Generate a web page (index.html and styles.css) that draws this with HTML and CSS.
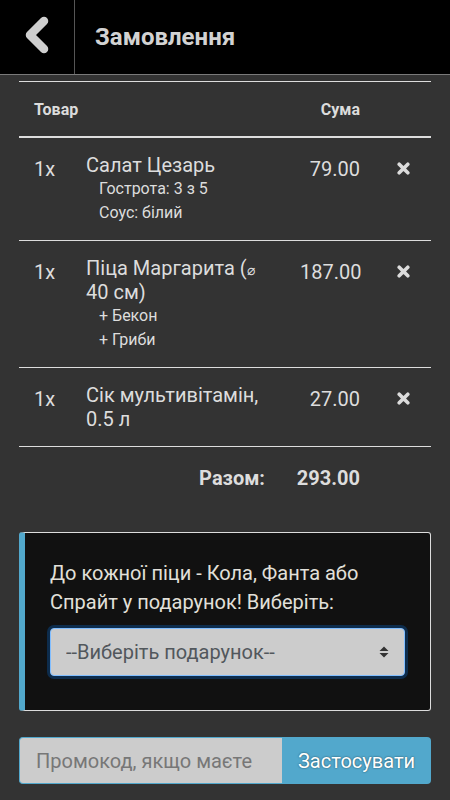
FILE: index.html
```html
<!DOCTYPE html>
<html lang="uk">
<head>
<meta charset="utf-8">
<title>Замовлення</title>
<link rel="stylesheet" href="styles.css">
</head>
<body>
<header class="topbar">
  <a class="back" href="#" aria-label="Назад">
    <svg width="74" height="74" viewBox="0 0 74 74"><polyline points="44,21 30,35 44,49" fill="none" stroke="#cfcfcf" stroke-width="8.5" stroke-linecap="round" stroke-linejoin="round"/></svg>
  </a>
  <h1 class="title">Замовлення</h1>
</header>
<main class="content">
  <div class="order">
    <div class="row head">
      <div class="c-qty">Товар</div>
      <div class="c-name"></div>
      <div class="c-price">Сума</div>
      <div class="c-del"></div>
    </div>
    <div class="row item">
      <div class="c-qty">1x</div>
      <div class="c-name">Салат Цезарь
        <div class="opt">Гострота: 3 з 5</div>
        <div class="opt">Соус: білий</div>
      </div>
      <div class="c-price">79.00</div>
      <div class="c-del"><svg class="x" width="13" height="13" viewBox="0 0 13 13"><path d="M2.2 2.2 L10.8 10.8 M10.8 2.2 L2.2 10.8" stroke="#dcdcdc" stroke-width="3.6" stroke-linecap="round"/></svg></div>
    </div>
    <div class="row item">
      <div class="c-qty">1x</div>
      <div class="c-name">Піца Маргарита (<span class="diam">⌀</span> 40 см)
        <div class="opt">+ Бекон</div>
        <div class="opt">+ Гриби</div>
      </div>
      <div class="c-price">187.00</div>
      <div class="c-del"><svg class="x" width="13" height="13" viewBox="0 0 13 13"><path d="M2.2 2.2 L10.8 10.8 M10.8 2.2 L2.2 10.8" stroke="#dcdcdc" stroke-width="3.6" stroke-linecap="round"/></svg></div>
    </div>
    <div class="row item">
      <div class="c-qty">1x</div>
      <div class="c-name">Сік мультивітамін, 0.5 л</div>
      <div class="c-price">27.00</div>
      <div class="c-del"><svg class="x" width="13" height="13" viewBox="0 0 13 13"><path d="M2.2 2.2 L10.8 10.8 M10.8 2.2 L2.2 10.8" stroke="#dcdcdc" stroke-width="3.6" stroke-linecap="round"/></svg></div>
    </div>
    <div class="row total">
      <div class="c-qty"></div>
      <div class="c-name">Разом:</div>
      <div class="c-price">293.00</div>
      <div class="c-del"></div>
    </div>
  </div>

  <section class="gift">
    <label class="gift-text" for="gift">До кожної піци - Кола, Фанта або Спрайт у подарунок! Виберіть:</label>
    <div class="select-wrap">
      <select id="gift" class="gift-select">
        <option>--Виберіть подарунок--</option>
        <option>Кола</option>
        <option>Фанта</option>
        <option>Спрайт</option>
      </select>
      <svg class="arrows" width="10" height="12" viewBox="0 0 10 12"><path d="M5 0.5 L9.5 5 L0.5 5 Z M5 11.5 L9.5 7 L0.5 7 Z" fill="#333"/></svg>
    </div>
  </section>

  <form class="promo">
    <input class="promo-input" type="text" placeholder="Промокод, якщо маєте">
    <button class="promo-btn" type="button">Застосувати</button>
  </form>
</main>
</body>
</html>
```

FILE: styles.css
```css
* { box-sizing: border-box; }

html, body {
  margin: 0;
  padding: 0;
  background: #333333;
}

body {
  font-family: Roboto, "Noto Sans", "Liberation Sans", sans-serif;
  color: #dddddd;
  height: 800px;
  overflow: hidden;
}

.topbar {
  display: flex;
  align-items: center;
  height: 75px;
  background: #000;
  border-bottom: 1px solid #7a7a7a;
}

.back {
  display: block;
  width: 75px;
  height: 74px;
  border-right: 1px solid #555;
}

.back svg { display: block; }

.title {
  margin: 0 0 0 20px;
  font-size: 24px;
  font-weight: 700;
  color: #d2d2d2;
  line-height: 1;
}

.content {
  padding: 6px 19px 0;
}

.order {
  border-top: 1px solid #dddddd;
}

.row {
  display: grid;
  grid-template-columns: 52px 214px 90px 56px;
}

.row > div {
  padding: 0 15px;
}

.head {
  height: 56px;
  align-items: center;
  border-bottom: 2px solid #dddddd;
  font-size: 16px;
  font-weight: 700;
  color: #dcdcdc;
}

.c-price { text-align: right; }

.c-del {
  display: flex;
  justify-content: center;
}

.item {
  border-bottom: 1px solid #dddddd;
  font-size: 20px;
  line-height: 24px;
}

.item > div {
  padding-top: 15px;
  padding-bottom: 15px;
}

.item > .c-qty,
.item > .c-price {
  padding-top: 19px;
}

.item > .c-del {
  padding: 24px 0 0;
  align-items: flex-start;
}

.x { display: block; }

.diam {
  font-size: 14px;
  line-height: 0;
}

.opt {
  font-size: 16px;
  line-height: 24px;
  padding-left: 13px;
}

.total {
  font-size: 20px;
  font-weight: 700;
  line-height: 24px;
  padding: 19px 0 17px;
}

.total .c-name {
  text-align: right;
  padding-right: 20px;
}

.total .c-price {
  padding-left: 0;
}

.gift {
  margin-top: 25px;
  background: #111111;
  border: 1px solid #dddddd;
  border-left: 6px solid #52a8cc;
  border-radius: 3px;
  padding: 26px 25px 24px 25px;
}

.gift-text {
  display: block;
  font-size: 20px;
  line-height: 29px;
  color: #e2e0da;
  margin-bottom: 11px;
}

.select-wrap {
  position: relative;
  margin-bottom: 10px;
}

.gift-select {
  display: block;
  width: 100%;
  height: 48px;
  appearance: none;
  -webkit-appearance: none;
  background: #cccccc;
  border: 1px solid #80bdff;
  border-radius: 4px;
  box-shadow: 0 0 0 3px #0d2c4c;
  font-family: inherit;
  font-size: 20px;
  color: #52575c;
  padding: 0 40px 0 15px;
  outline: none;
}

.arrows {
  position: absolute;
  right: 16px;
  top: 18px;
}

.promo {
  display: flex;
  margin-top: 26px;
  height: 47px;
}

.promo-input {
  flex: 1;
  min-width: 0;
  height: 100%;
  background: #cccccc;
  border: 1px solid #52a8cc;
  border-right: none;
  border-radius: 4px 0 0 4px;
  font-family: inherit;
  font-size: 20px;
  color: #333;
  padding: 0 16px;
  outline: none;
}

.promo-input::placeholder { color: #777; }

.promo-btn {
  flex: 0 0 149px;
  height: 100%;
  background: #52a8cc;
  border: none;
  border-radius: 0 4px 4px 0;
  color: #ffffff;
  font-family: inherit;
  font-size: 20px;
  text-shadow: 0 0 2px rgba(0,0,0,0.6);
  padding: 0;
}
```
